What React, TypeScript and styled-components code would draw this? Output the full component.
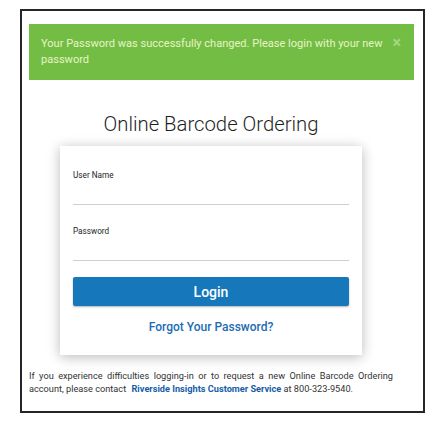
import React from "react";
import styled, { createGlobalStyle } from "styled-components";

const GlobalStyle = createGlobalStyle`
  html, body {
    margin: 0;
    padding: 0;
    background: #ffffff;
    font-family: Roboto, "Liberation Sans", Arial, sans-serif;
  }
`;

const Frame = styled.div`
  box-sizing: border-box;
  width: 405px;
  height: 404px;
  margin: 9px 0 0 20px;
  border: 2px solid #262626;
  padding: 13px 0 0 7px;
`;

const Alert = styled.div`
  box-sizing: border-box;
  width: 385px;
  min-height: 56px;
  background: #73bd45;
  color: #e6f4c4;
  font-size: 11.05px;
  line-height: 16px;
  padding: 12px 30px 12px 12px;
  position: relative;
`;

const Close = styled.span`
  position: absolute;
  right: 13px;
  top: 11px;
  font-size: 16px;
  font-weight: 700;
  color: #a3d786;
  line-height: 16px;
`;

const Column = styled.div`
  width: 364px;
`;

const Title = styled.h1`
  margin: 32px 0 0;
  text-align: center;
  font-size: 20.3px;
  font-weight: 300;
  line-height: 25px;
  color: #1f1f1f;
`;

const Card = styled.div`
  box-sizing: border-box;
  margin: 9px 31px 0;
  background: #fff;
  padding: 24px 13px 21px;
  box-shadow: 0 2px 12px rgba(0, 0, 0, 0.28);
`;

const Field = styled.div<{ gap?: number }>`
  margin-top: ${(p) => p.gap ?? 0}px;
  border-bottom: 1px solid #cfcfcf;
  height: 34px;
`;

const Label = styled.div`
  font-size: 8.2px;
  font-weight: 400;
  line-height: 10px;
  color: #1e1e1e;
`;

const Button = styled.button`
  display: block;
  width: 100%;
  height: 29px;
  margin-top: 16px;
  border: none;
  border-radius: 2px;
  background: #1677bb;
  color: #fff;
  font-family: inherit;
  font-size: 14px;
  font-weight: 500;
  box-shadow: 0 1px 2px rgba(0, 0, 0, 0.3);
`;

const Forgot = styled.a`
  display: block;
  margin-top: 14px;
  text-align: center;
  font-size: 12px;
  font-weight: 500;
  line-height: 14px;
  color: #1b6cb3;
  text-decoration: none;
`;

const Footer = styled.p`
  margin: 14px 0 0;
  font-size: 9.2px;
  line-height: 13px;
  color: #333;
  text-align: justify;
`;

const Link = styled.a`
  margin-left: 3px;
  color: #165ca8;
  font-weight: 700;
  text-decoration: none;
`;

export default function App() {
  return (
    <>
      <GlobalStyle />
      <Frame>
        <Alert>
          Your Password was successfully changed. Please login with your new
          password
          <Close>×</Close>
        </Alert>
        <Column>
          <Title>Online Barcode Ordering</Title>
          <Card>
            <Field>
              <Label>User Name</Label>
            </Field>
            <Field gap={21}>
              <Label>Password</Label>
            </Field>
            <Button>Login</Button>
            <Forgot>Forgot Your Password?</Forgot>
          </Card>
          <Footer>
            If you experience difficulties logging-in or to request a new Online
            Barcode Ordering account, please contact{" "}
            <Link>Riverside Insights Customer Service</Link> at 800-323-9540.
          </Footer>
        </Column>
      </Frame>
    </>
  );
}
